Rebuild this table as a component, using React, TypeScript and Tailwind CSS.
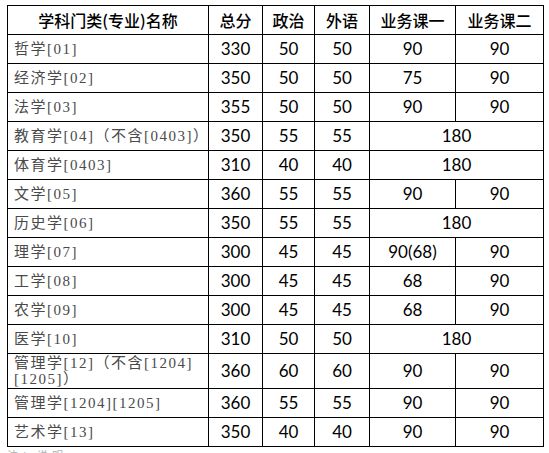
import React from "react";

type Row = {
  name: React.ReactNode;
  total: string;
  pol: string;
  lang: string;
  c1: string;
  c2?: string;
  tall?: boolean;
};

const rows: Row[] = [
  { name: "哲学[01]", total: "330", pol: "50", lang: "50", c1: "90", c2: "90" },
  { name: "经济学[02]", total: "350", pol: "50", lang: "50", c1: "75", c2: "90" },
  { name: "法学[03]", total: "355", pol: "50", lang: "50", c1: "90", c2: "90" },
  { name: "教育学[04]（不含[0403]）", total: "350", pol: "55", lang: "55", c1: "180" },
  { name: "体育学[0403]", total: "310", pol: "40", lang: "40", c1: "180" },
  { name: "文学[05]", total: "360", pol: "55", lang: "55", c1: "90", c2: "90" },
  { name: "历史学[06]", total: "350", pol: "55", lang: "55", c1: "180" },
  { name: "理学[07]", total: "300", pol: "45", lang: "45", c1: "90(68)", c2: "90" },
  { name: "工学[08]", total: "300", pol: "45", lang: "45", c1: "68", c2: "90" },
  { name: "农学[09]", total: "300", pol: "45", lang: "45", c1: "68", c2: "90" },
  { name: "医学[10]", total: "310", pol: "50", lang: "50", c1: "180" },
  {
    name: (
      <>
        管理学[12]（不含[1204]
        <br />
        [1205]）
      </>
    ),
    total: "360",
    pol: "60",
    lang: "60",
    c1: "90",
    c2: "90",
    tall: true,
  },
  { name: "管理学[1204][1205]", total: "360", pol: "55", lang: "55", c1: "90", c2: "90" },
  { name: "艺术学[13]", total: "350", pol: "40", lang: "40", c1: "90", c2: "90" },
];

const nameFont = {
  fontFamily: '"Liberation Serif", "Noto Sans CJK SC", serif',
};

export default function App() {
  const num = "border border-black text-center text-[17px] text-black font-['Lato',_'Liberation_Sans',_sans-serif] p-0";
  const head = "border border-black text-center text-[16px] text-black font-medium font-['Noto_Sans_CJK_SC',_sans-serif] p-0";
  return (
    <div className="w-[549px] h-[453px] overflow-hidden bg-white">
      <div className="pt-[5px] pl-[7px]">
        <table className="border-collapse table-fixed w-[536px]">
          <colgroup>
            <col className="w-[201px]" />
            <col className="w-[54px]" />
            <col className="w-[52px]" />
            <col className="w-[55px]" />
            <col className="w-[86px]" />
            <col className="w-[88px]" />
          </colgroup>
          <thead>
            <tr className="h-[29px]">
              <th className={head}>学科门类(专业)名称</th>
              <th className={head}>总分</th>
              <th className={head}>政治</th>
              <th className={head}>外语</th>
              <th className={head}>业务课一</th>
              <th className={head}>业务课二</th>
            </tr>
          </thead>
          <tbody>
            {rows.map((r, i) => (
              <tr key={i} className={r.tall ? "h-[35px]" : "h-[29px]"}>
                <td
                  className="border border-black pl-[6px] pr-0 py-0 text-[15px] leading-[16px] tracking-[1.5px] text-[#4a4a4a] text-left"
                  style={nameFont}
                >
                  {r.name}
                </td>
                <td className={num}>{r.total}</td>
                <td className={num}>{r.pol}</td>
                <td className={num}>{r.lang}</td>
                {r.c2 === undefined ? (
                  <td className={num} colSpan={2}>
                    {r.c1}
                  </td>
                ) : (
                  <>
                    <td className={num}>{r.c1}</td>
                    <td className={num}>{r.c2}</td>
                  </>
                )}
              </tr>
            ))}
          </tbody>
        </table>
        <div className="mt-[2px] text-[11px] leading-[12px] text-[#b0b0b0] tracking-[4px] font-['Noto_Sans_CJK_SC',_sans-serif]">
          注：说明
        </div>
      </div>
    </div>
  );
}
